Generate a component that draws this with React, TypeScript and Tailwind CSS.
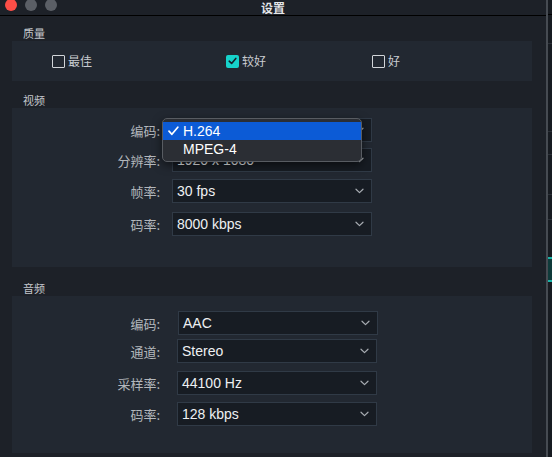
import React from "react";

const CJK = "font-['Noto_Sans_CJK_SC','Noto_Sans',sans-serif]";
const LAT = "font-['Liberation_Sans','Noto_Sans_CJK_SC',sans-serif]";

function Chevron() {
  return (
    <svg width="9" height="6" viewBox="0 0 9 6" className="shrink-0">
      <polyline points="1,1.2 4.5,4.6 8,1.2" fill="none" stroke="#a7acb2" strokeWidth="1.2" strokeLinecap="round" strokeLinejoin="round" />
    </svg>
  );
}

function Select({ value, w = "w-[200px]" }: { value: string; w?: string }) {
  return (
    <div className={`${w} h-[24px] bg-[#171c23] border border-[#303a46] flex items-center pl-[4px] pr-[7px]`}>
      <span className={`${LAT} text-[14px] text-[#eef0f2] flex-1 leading-none`}>{value}</span>
      <Chevron />
    </div>
  );
}

function Row({ label, value, gap, mt }: { label: string; value: string; gap: string; mt: string }) {
  return (
    <div className={`flex items-center ${mt}`}>
      <div className={`w-[148px] text-right ${CJK} text-[13px] text-[#b3b7bc] leading-none`}>{label}</div>
      <div className={gap} />
      <Select value={value} />
    </div>
  );
}

function Check({ checked, label, w }: { checked?: boolean; label: string; w: string }) {
  return (
    <div className={`flex items-center ${w}`}>
      {checked ? (
        <div className="w-[13px] h-[13px] rounded-[2px] bg-[#16d3cb] flex items-center justify-center">
          <svg width="9" height="8" viewBox="0 0 9 8">
            <polyline points="1.2,4.2 3.6,6.4 7.8,1.4" fill="none" stroke="#14202a" strokeWidth="1.6" strokeLinecap="round" strokeLinejoin="round" />
          </svg>
        </div>
      ) : (
        <div className="w-[13px] h-[13px] border-[1.5px] border-[#d2d5d9] rounded-[1px]" />
      )}
      <span className={`ml-[3px] ${CJK} text-[12px] text-[#c9ccd0] leading-none`}>{label}</span>
    </div>
  );
}

function SectionLabel({ text, mt }: { text: string; mt: string }) {
  return (
    <div className={`h-[16px] flex items-center pl-[11px] ${mt} ${CJK} text-[11px] text-[#c3c7cc]`}>{text}</div>
  );
}

export default function App() {
  return (
    <div className="w-[552px] h-[457px] bg-[#1d2128] flex overflow-hidden">
      <div className="w-[546px] h-full flex flex-col">
        {/* title bar */}
        <div className="h-[16px] border-b border-black grid grid-cols-[1fr_auto_1fr] items-start">
          <div className="flex gap-[8px] pl-[5px] -mt-[1px]">
            <div className="w-[12px] h-[12px] rounded-full bg-[#fd4e47]" />
            <div className="w-[12px] h-[12px] rounded-full bg-[#5b5f66]" />
            <div className="w-[12px] h-[12px] rounded-full bg-[#5b5f66]" />
          </div>
          <div className={`${CJK} text-[12px] font-bold text-[#e4e6e8] leading-[15px]`}>设置</div>
          <div />
        </div>

        <div className="px-[12px] flex flex-col">
          <SectionLabel text="质量" mt="mt-[9px]" />
          <div className="w-[520px] h-[40px] bg-[#222831] flex items-center pl-[40px]">
            <Check label="最佳" w="w-[174px]" />
            <Check label="较好" checked w="w-[146px]" />
            <Check label="好" w="w-[60px]" />
          </div>

          <SectionLabel text="视频" mt="mt-[11px]" />
          <div className="w-[520px] h-[159px] bg-[#222831] flex flex-col pt-[10px] relative">
            <Row label="编码:" value="H.264" gap="w-[12px]" mt="" />
            <Row label="分辨率:" value="1920 x 1080" gap="w-[12px]" mt="mt-[6px]" />
            <Row label="帧率:" value="30 fps" gap="w-[12px]" mt="mt-[7px]" />
            <Row label="码率:" value="8000 kbps" gap="w-[12px]" mt="mt-[9px]" />

            {/* dropdown menu */}
            <div className="absolute left-[150px] top-[10px] w-[200px] h-[44px] bg-[#2b2e34] border border-[#585c62] rounded-[5px] shadow-[0_3px_10px_rgba(0,0,0,0.55)] py-[3px] flex flex-col">
              <div className="h-[18px] bg-[#0c5bd6] flex items-center">
                <svg width="11" height="10" viewBox="0 0 11 10" className="ml-[5px]">
                  <polyline points="1,5.2 3.9,8.3 9.8,1.2" fill="none" stroke="#ffffff" strokeWidth="1.7" strokeLinecap="round" strokeLinejoin="round" />
                </svg>
                <span className={`${LAT} text-[14px] text-white ml-[4px] leading-none`}>H.264</span>
              </div>
              <div className="h-[18px] flex items-center pl-[20px]">
                <span className={`${LAT} text-[14px] text-white leading-none`}>MPEG-4</span>
              </div>
            </div>
          </div>

          <SectionLabel text="音频" mt="mt-[13px]" />
          <div className="w-[520px] h-[157px] bg-[#222831] flex flex-col pt-[15px]">
            <Row label="编码:" value="AAC" gap="w-[18px]" mt="" />
            <Row label="通道:" value="Stereo" gap="w-[17px]" mt="mt-[4px]" />
            <Row label="采样率:" value="44100 Hz" gap="w-[17px]" mt="mt-[8px]" />
            <Row label="码率:" value="128 kbps" gap="w-[17px]" mt="mt-[7px]" />
          </div>
        </div>
      </div>

      {/* right edge: window border + neighbouring app */}
      <div className="w-[2px] h-full bg-[#464b52]" />
      <div className="w-[4px] h-full bg-[#171b21] flex flex-col">
        <div className="h-[15px] border-b border-black" />
        <div className="h-[29px] border-b border-[#2c3138]" />
        <div className="h-[88px] border-b border-[#2c3138]" />
        <div className="h-[23px] border-b border-[#2c3138]" />
        <div className="h-[40px] border-b border-[#2c3138]" />
        <div className="h-[25px] border-b border-[#2c3138]" />
        <div className="h-[37px]" />
        <div className="h-[25px] border-t-2 border-b-2 border-[#18b3a8] bg-[#0f3a3a]" />
      </div>
    </div>
  );
}
